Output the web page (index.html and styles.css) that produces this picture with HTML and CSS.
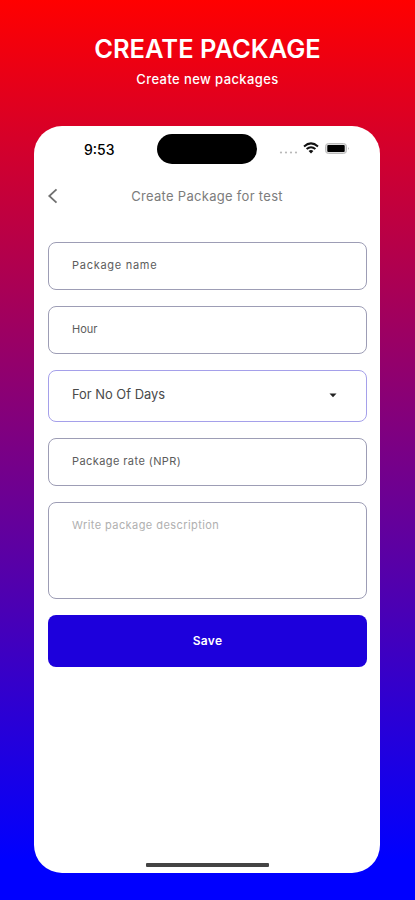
FILE: index.html
```html
<!DOCTYPE html>
<html lang="en">
<head>
<meta charset="utf-8">
<title>Create Package</title>
<link rel="stylesheet" href="styles.css">
</head>
<body>
<header class="hero">
  <h1><span>CREATE PACKAGE</span></h1>
  <p><span>Create new packages</span></p>
</header>
<main class="phone">
  <div class="status">
    <span class="time">9:53</span>
    <span class="island"></span>
    <svg class="indicators" width="72" height="14" viewBox="0 0 72 14">
      <g fill="#b9b9b9"><circle cx="3" cy="10.5" r="1.1"/><circle cx="8" cy="10.5" r="1.1"/><circle cx="13" cy="10.5" r="1.1"/><circle cx="18" cy="10.5" r="1.1"/></g>
      <g fill="none" stroke="#111" stroke-width="2"><path d="M26 4.4Q33 -1.6 40 4.4"/><path d="M28.6 7.1Q33 3.3 37.4 7.1"/></g>
      <path d="M30.6 9Q33 7 35.4 9L33 11.4Z" fill="#111"/>
      <rect x="47.5" y="1.5" width="21" height="10" rx="3" fill="#ddd" stroke="#bbb"/>
      <rect x="49.3" y="3" width="17.4" height="7" rx="1" fill="#000"/>
      <path d="M70 5v3q1.6-1.5 0-3" fill="#aaa"/>
    </svg>
  </div>
  <div class="nav">
    <svg width="12" height="18" viewBox="0 0 12 18"><path d="M9.5 2.3L2.3 9L9.5 15.7" fill="none" stroke="#707070" stroke-width="1.8"/></svg>
    <h2><span>Create Package for test</span></h2>
  </div>
  <form class="form">
    <div class="field"><span class="t-name">Package name</span></div>
    <div class="field"><span class="t-hour">Hour</span></div>
    <div class="field select"><span class="t-days">For No Of Days</span>
      <svg width="8" height="5" viewBox="0 0 8 5"><path d="M.5 .5H7.5L4 4.2Z" fill="#222"/></svg>
    </div>
    <div class="field"><span class="t-rate">Package rate (NPR)</span></div>
    <div class="field area"><span class="t-desc">Write package description</span></div>
    <button type="button" class="save">Save</button>
  </form>
  <div class="home"></div>
</main>
</body>
</html>
```
FILE: styles.css
```css
* { box-sizing: border-box; }
body {
  margin: 0;
  height: 900px;
  overflow: hidden;
  background: linear-gradient(#ff0000 0, #0000ff 860px);
  font-family: Inter, "Open Sans", sans-serif;
}
h1, h2, p { margin: 0; }
.hero {
  height: 126px;
  padding-top: 33px;
  color: #fff;
  text-align: center;
  white-space: nowrap;
}
.hero h1 { font-size: 25.5px; line-height: 32px; font-weight: 600; }
.hero p { margin-top: 5px; font-size: 13px; line-height: 18px; font-weight: 500; letter-spacing: .4px; }
.phone {
  display: flex;
  flex-direction: column;
  width: 346px;
  height: 747px;
  margin-left: 34px;
  padding: 0 13px 0 14px;
  background: #fff;
  border-radius: 28px;
}
.status {
  display: grid;
  grid-template-columns: 109px 100px 1fr;
  align-items: center;
  height: 46px;
}
.time { padding-left: 36px; font-size: 14px; font-weight: 500; }
.island { height: 30px; background: #000; border-radius: 15px; }
.indicators { margin-left: 21px; }
.nav {
  display: grid;
  grid-template-columns: 12px 1fr 12px;
  align-items: center;
  height: 48px;
  margin-left: -1px;
}
.nav h2 {
  color: #7c7c7c;
  font-size: 13px;
  font-weight: 400;
  letter-spacing: .3px;
  text-align: center;
  white-space: nowrap;
}
.form {
  display: flex;
  flex-direction: column;
  gap: 16px;
  margin-top: 22px;
}
.field {
  display: flex;
  align-items: center;
  height: 48px;
  padding: 0 29px 2px 23px;
  border: 1px solid #9d9db5;
  border-radius: 8px;
  color: #5c5c5c;
  font-size: 11px;
  line-height: 16px;
  white-space: nowrap;
}
.t-name { letter-spacing: .72px; }
.t-rate { letter-spacing: .42px; }
.t-desc { letter-spacing: .43px; }
.select {
  justify-content: space-between;
  height: 52px;
  border-color: #a5a0ea;
  color: #4a4a4a;
  font-size: 12.9px;
}
.area {
  align-items: flex-start;
  height: 97px;
  padding-top: 14px;
  color: #b0b0b0;
}
.save {
  height: 52px;
  padding: 0;
  border: 0;
  border-radius: 8px;
  background: #1d00dc;
  color: #fff;
  font: 600 12px/52px Inter, sans-serif;
  letter-spacing: .3px;
}
.home {
  width: 123px;
  height: 4px;
  margin: auto 0 6px 98px;
  border-radius: 1px;
  background: #444;
}
```
